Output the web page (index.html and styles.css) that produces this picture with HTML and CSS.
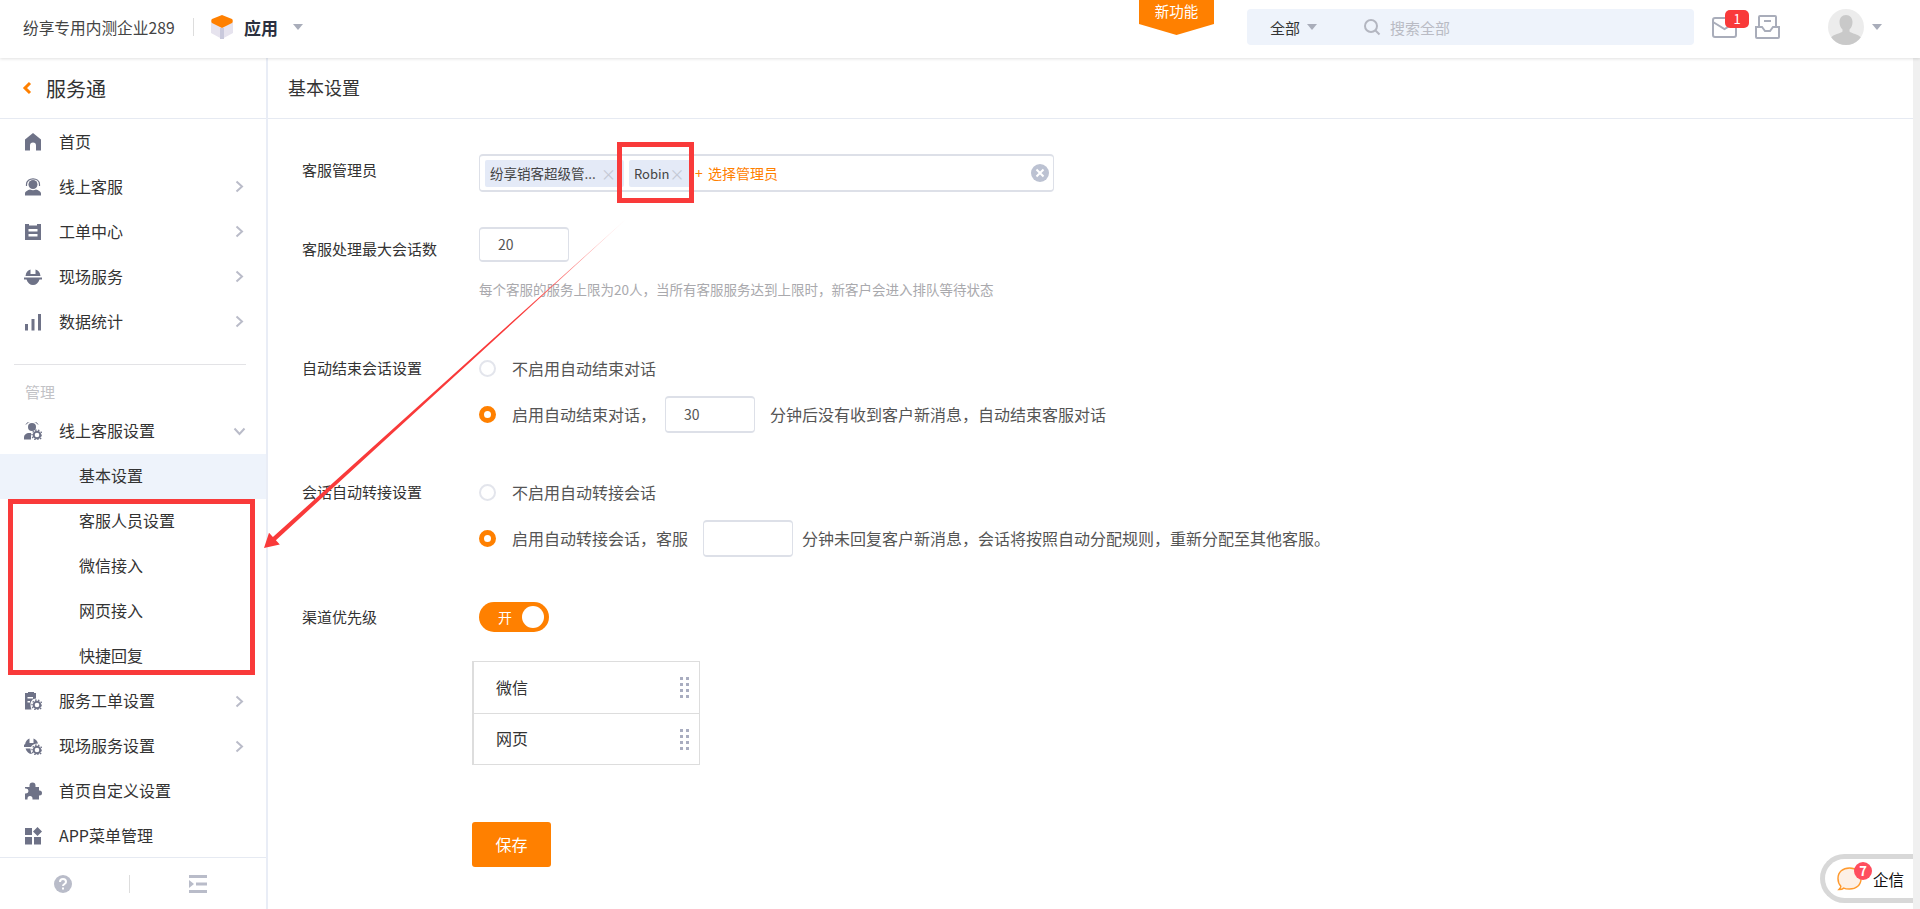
FILE: index.html
```html
<!DOCTYPE html>
<html lang="zh">
<head>
    <meta charset="utf-8">
    <title>基本设置</title>
    <link rel="stylesheet" href="styles.css">
</head>
<body>
    <header class="topbar">
        <div class="company">纷享专用内测企业289</div>
        <div class="topbar-sep"></div>
        <svg class="app-logo" viewBox="0 0 22 24">
            <path fill="#e6e3ee" d="M0 7l11 6 11-6v11l-11 6-11-6z"/>
            <path fill="#c9c9dc" d="M9 13h4v11h-4z"/>
            <path fill="#ff8000" d="M11 0l10 4c1 .5 1 3.5 0 4l-10 5-10-5c-1-.5-1-3.5 0-4z"/>
        </svg>
        <div class="app-name">应用</div>
        <span class="caret app-caret"></span>

        <div class="new-feature">新功能</div>

        <div class="search-box">
            <span class="search-scope">全部</span>
            <span class="caret"></span>
            <svg class="search-icon" viewBox="0 0 18 18">
                <circle cx="8" cy="8" r="6" fill="none" stroke="#b3b6c0" stroke-width="2"/>
                <path d="M12.5 12.5l4 4" stroke="#b3b6c0" stroke-width="2"/>
            </svg>
            <span class="search-text">搜索全部</span>
        </div>

        <div class="mail">
            <svg class="mail-icon" viewBox="0 0 25 21">
                <rect x="1" y="1" width="23" height="19" rx="2" fill="none" stroke="#a9adba" stroke-width="2"/>
                <path d="M1 5l11.500 7L24 5" fill="none" stroke="#a9adba" stroke-width="2"/>
            </svg>
            <span class="mail-badge">1</span>
        </div>
        <svg class="inbox-icon" viewBox="0 0 25 24">
            <path d="M4 12V2c0-.5.5-1 1-1h15c.5 0 1 .5 1 1v10" fill="none" stroke="#a9adba" stroke-width="2"/>
            <path d="M9 6h7" stroke="#a9adba" stroke-width="2"/>
            <path d="M1 12h6l3 4h5l3-4h6v10c0 .5-.5 1-1 1H2c-.5 0-1-.5-1-1z" fill="none" stroke="#a9adba" stroke-width="2"/>
        </svg>
        <svg class="avatar" viewBox="0 0 36 36">
            <clipPath id="avatarClip"><circle cx="18" cy="18" r="18"/></clipPath>
            <circle cx="18" cy="18" r="18" fill="#ececec"/>
            <path clip-path="url(#avatarClip)" fill="#c9c9c9" d="M18 6c4 0 6.500 3 6.500 7 0 3-1 5.500-3 7.500v2c2 2 9 2.500 12 6.500v8H2.500v-8c3-4 10-4.500 12-6.500v-2c-2-2-3-4.500-3-7.500 0-4 2.500-7 6.500-7z"/>
        </svg>
        <span class="caret avatar-caret"></span>
    </header>

    <div class="layout">
        <aside class="sidebar">
            <div class="sidebar-title">
                <svg class="back-icon" viewBox="0 0 10 14"><path d="M8 2L3 7l5 5" fill="none" stroke="#ff8000" stroke-width="3"/></svg>
                服务通
            </div>

            <div class="menu">
                <div class="menu-item">
                    <svg class="menu-icon" viewBox="0 0 18 18"><path d="M9 0l8 6.500V17.500h-5v-5a3 3 0 0 0-6 0v5H1V6.500z"/></svg>
                    首页
                </div>
                <div class="menu-item">
                    <svg class="menu-icon" viewBox="0 0 18 18"><circle cx="9" cy="6.500" r="4.500"/><path d="M2.500 8V6.500c0-7.500 13-7.500 13 0V8" fill="none" stroke="#6e7287" stroke-width="1.200"/><path d="M1 17.500v-2c0-2 3-3.500 5-4 2 1 4 1 6 0 2 .5 5 2 5 4v2z"/></svg>
                    线上客服
                    <svg class="chevron" viewBox="0 0 9 13"><path d="M1.500 1.500L7 6.500l-5.500 5" fill="none" stroke="#babcc9" stroke-width="2"/></svg>
                </div>
                <div class="menu-item">
                    <svg class="menu-icon" viewBox="0 0 18 18"><path fill-rule="evenodd" d="M1 1h4v1.500h8V1h4v16H1zM4.500 6v2.500h9V6zm0 5v2.500h9V11z"/></svg>
                    工单中心
                    <svg class="chevron" viewBox="0 0 9 13"><path d="M1.500 1.500L7 6.500l-5.500 5" fill="none" stroke="#babcc9" stroke-width="2"/></svg>
                </div>
                <div class="menu-item">
                    <svg class="menu-icon" viewBox="0 0 18 18"><path d="M1.500 8C2 4 4 2 6.500 1.500V6h5V1.500C14 2 16 4 16.500 8zM0 9.500h18v2h-2.500C14.500 15 12 17 9 17s-5.500-2-6.500-5.500H0z"/></svg>
                    现场服务
                    <svg class="chevron" viewBox="0 0 9 13"><path d="M1.500 1.500L7 6.500l-5.500 5" fill="none" stroke="#babcc9" stroke-width="2"/></svg>
                </div>
                <div class="menu-item">
                    <svg class="menu-icon" viewBox="0 0 18 18"><path d="M1 11h3v6.500H1zM7.500 6h3v11.500h-3zM14 1h3v16.500h-3z"/></svg>
                    数据统计
                    <svg class="chevron" viewBox="0 0 9 13"><path d="M1.500 1.500L7 6.500l-5.500 5" fill="none" stroke="#babcc9" stroke-width="2"/></svg>
                </div>

                <div class="menu-divider"></div>
                <div class="menu-group">管理</div>

                <div class="menu-item">
                    <svg class="menu-icon" viewBox="0 0 18 18">
                        <circle cx="8" cy="5" r="4"/><path d="M2 2.500a7 7 0 0 1 12 0" fill="none" stroke="#6e7287"/>
                        <path d="M0 17.500v-2.500c0-2 2-3.500 4-4h3v6.500z"/>
                        <circle cx="13" cy="13" r="3.300" fill="none" stroke="#6e7287" stroke-width="2"/>
                        <circle cx="13" cy="13" r="5" fill="none" stroke="#6e7287" stroke-width="1.300" stroke-dasharray="1.500 1.500"/>
                    </svg>
                    线上客服设置
                    <svg class="chevron-down" viewBox="0 0 13 9"><path d="M1.500 1.500l5 5.500 5-5.500" fill="none" stroke="#babcc9" stroke-width="2"/></svg>
                </div>
                <div class="menu-sub active">基本设置</div>
                <div class="menu-sub">客服人员设置</div>
                <div class="menu-sub">微信接入</div>
                <div class="menu-sub">网页接入</div>
                <div class="menu-sub">快捷回复</div>
                <div class="menu-item">
                    <svg class="menu-icon" viewBox="0 0 18 18">
                        <path d="M1 1h3V0h6v1h2v5.500c-3.500 0-5.500 3-5.500 6 0 2 .5 3.500 1 5H1zM3.500 5v1.500H9V5zm0 4v1.500h2.500V9z"/>
                        <circle cx="13" cy="13" r="3.300" fill="none" stroke="#6e7287" stroke-width="2"/>
                        <circle cx="13" cy="13" r="5" fill="none" stroke="#6e7287" stroke-width="1.300" stroke-dasharray="1.500 1.500"/>
                    </svg>
                    服务工单设置
                    <svg class="chevron" viewBox="0 0 9 13"><path d="M1.500 1.500L7 6.500l-5.500 5" fill="none" stroke="#babcc9" stroke-width="2"/></svg>
                </div>
                <div class="menu-item">
                    <svg class="menu-icon" viewBox="0 0 18 18">
                        <path d="M1 7.500C1.500 4 3.500 2 5.500 1.500V6h4V1.500c2 .5 4 2.500 4.500 5-3.500 0-6 1.500-7 3.500H0V7.500zM1.500 11.500h5c0 2 .5 4 1.500 5.500-3 0-5.500-2-6.500-5.500z"/>
                        <circle cx="13" cy="13" r="3.300" fill="none" stroke="#6e7287" stroke-width="2"/>
                        <circle cx="13" cy="13" r="5" fill="none" stroke="#6e7287" stroke-width="1.300" stroke-dasharray="1.500 1.500"/>
                    </svg>
                    现场服务设置
                    <svg class="chevron" viewBox="0 0 9 13"><path d="M1.500 1.500L7 6.500l-5.500 5" fill="none" stroke="#babcc9" stroke-width="2"/></svg>
                </div>
                <div class="menu-item">
                    <svg class="menu-icon" viewBox="0 0 18 18"><path d="M5.500 3.500a3 3 0 0 1 6 0V5H15v3.500h.5a2.500 2.500 0 0 1 0 5H15v4H8.500v-1a2.500 2.500 0 0 0-5 0v1H1v-6h1a2.500 2.500 0 0 0 0-5H1V5h4.500z"/></svg>
                    首页自定义设置
                </div>
                <div class="menu-item">
                    <svg class="menu-icon" viewBox="0 0 18 18"><path d="M1 1h7v7H1zM1 10h7v7.500H1zM10 10h7v7.500h-7zM13.500 0L18 4.500 13.500 9 9 4.500z"/></svg>
                    APP菜单管理
                </div>
            </div>

            <div class="sidebar-footer">
                <svg class="footer-icon" viewBox="0 0 18 18">
                    <circle cx="9" cy="9" r="9" fill="#b9bcc9"/>
                    <path d="M6 7c0-4 6-4 6 0 0 2-3 2-3 4" fill="none" stroke="#fff" stroke-width="2"/>
                    <path d="M8 12.500h2v2H8z" fill="#fff"/>
                </svg>
                <div class="footer-sep"></div>
                <svg class="footer-icon" viewBox="0 0 18 18">
                    <path fill="#b9bcc9" d="M0 0h18v3H0zM7 7.500h11v3H7zM0 15h18v3H0zM0 5l5 4-5 4z"/>
                </svg>
            </div>
        </aside>

        <main class="content">
            <div class="page-title">基本设置</div>

            <div class="form">
                <div class="form-row admin-row">
                    <div class="form-label label-up">客服管理员</div>
                    <div class="admin-box">
                        <span class="tag tag-long">纷享销客超级管...<i class="tag-x">×</i></span>
                        <span class="tag tag-short">Robin<i class="tag-x">×</i></span>
                        <span class="tag-add">+ 选择管理员</span>
                        <svg class="clear-icon" viewBox="0 0 18 18">
                            <circle cx="9" cy="9" r="9" fill="#bcc2d2"/>
                            <path d="M5.500 5.500l7 7M12.500 5.500l-7 7" stroke="#fff" stroke-width="2"/>
                        </svg>
                    </div>
                </div>

                <div class="form-row limit-row">
                    <div class="form-label label-down">客服处理最大会话数</div>
                    <div class="num-input limit-input">20</div>
                </div>
                <div class="hint">每个客服的服务上限为20人，当所有客服服务达到上限时，新客户会进入排队等待状态</div>

                <div class="form-row end-row">
                    <div class="form-label">自动结束会话设置</div>
                    <div class="option"><span class="radio"></span>不启用自动结束对话</div>
                </div>
                <div class="form-row option-row">
                    <div class="form-label"></div>
                    <div class="option">
                        <span class="radio checked"></span>启用自动结束对话，
                        <span class="num-input inline-input end-input">30</span>
                        分钟后没有收到客户新消息，自动结束客服对话
                    </div>
                </div>

                <div class="form-row transfer-row">
                    <div class="form-label">会话自动转接设置</div>
                    <div class="option"><span class="radio"></span>不启用自动转接会话</div>
                </div>
                <div class="form-row option-row">
                    <div class="form-label"></div>
                    <div class="option">
                        <span class="radio checked"></span>启用自动转接会话，客服
                        <span class="num-input inline-input transfer-input"></span>
                        分钟未回复客户新消息，会话将按照自动分配规则，重新分配至其他客服。
                    </div>
                </div>

                <div class="form-row channel-row">
                    <div class="form-label">渠道优先级</div>
                    <div class="switch"><span class="switch-text">开</span><span class="switch-knob"></span></div>
                </div>

                <div class="channel-table">
                    <div class="channel-item">微信<span class="drag-handle"><i></i><i></i><i></i><i></i><i></i><i></i><i></i><i></i></span></div>
                    <div class="channel-item">网页<span class="drag-handle"><i></i><i></i><i></i><i></i><i></i><i></i><i></i><i></i></span></div>
                </div>

                <button class="save-btn">保存</button>
            </div>
        </main>
        <div class="scrollbar"></div>
    </div>

    <!-- 截图上的红色标注 -->
    <div class="mark mark-robin"></div>
    <div class="mark mark-menu"></div>
    <svg class="mark-arrow" viewBox="0 0 1920 909">
        <defs>
            <linearGradient id="arrowFade" x1="625" y1="220" x2="274" y2="538" gradientUnits="userSpaceOnUse">
                <stop offset="0" stop-color="#ffd0d0"/>
                <stop offset="0.3" stop-color="#f93a3a"/>
            </linearGradient>
        </defs>
        <path fill="url(#arrowFade)" d="M625 220L275.900 540.200 279.800 544.500 264 548 269 532.700 272.900 537z"/>
    </svg>

    <div class="qixin">
        <svg class="qixin-icon" viewBox="0 0 26 25">
            <path fill="#fdf0e6" stroke="#ff9a2e" stroke-width="1.5" d="M13 1c7 0 12 4 12 11s-5 11-12 11c-2 0-4 0-6-1-1 1-3 1.500-5 1.500 1-1 2-2 2-3.500C2 18 1 15 1 12 1 5 6 1 13 1z"/>
        </svg>
        <span class="qixin-badge">7</span>
        <span class="qixin-text">企信</span>
    </div>
</body>
</html>
```

FILE: styles.css
```css
* {
    box-sizing: border-box;
}
html, body {
    margin: 0;
    height: 100%;
    overflow: hidden;
}
body {
    display: flex;
    flex-direction: column;
    font-family: "Noto Sans CJK SC", "Noto Sans", sans-serif;
    font-size: 16px;
    color: #333;
    background: #fff;
}

/* 顶部栏 */
.topbar {
    flex: none;
    height: 58px;
    display: flex;
    align-items: center;
    padding: 0 0 4px 23px;
    background: #fff;
    box-shadow: 0 1px 3px rgba(0, 0, 0, 0.12);
    z-index: 2;
}
.company {
    width: 152px;
    font-size: 15.7px;
    white-space: nowrap;
    color: #444;
}
.topbar-sep {
    width: 1px;
    height: 18px;
    margin-left: 18px;
    background: #ddd;
}
.app-logo {
    width: 22px;
    height: 24px;
    margin-left: 17px;
}
.app-name {
    margin-left: 11px;
    font-size: 17px;
    font-weight: 700;
    color: #2b3040;
}
.caret {
    width: 0;
    height: 0;
    border-left: 5px solid transparent;
    border-right: 5px solid transparent;
    border-top: 6px solid #a9adba;
}
.app-caret {
    margin-left: 15px;
}
.new-feature {
    width: 75px;
    height: 35px;
    margin: 0 0 auto 836px;
    padding-top: 1px;
    background: #ff8000;
    color: #fff;
    font-size: 14.5px;
    line-height: 20px;
    text-align: center;
    clip-path: polygon(0 0, 100% 0, 100% 24px, 50% 35px, 0 24px);
}
.search-box {
    width: 447px;
    height: 36px;
    margin-left: 33px;
    padding-left: 23px;
    display: flex;
    align-items: center;
    background: #eef3fb;
    border-radius: 4px;
}
.search-scope {
    font-size: 15px;
    margin-right: 7px;
    color: #333;
}
.search-icon {
    width: 18px;
    height: 18px;
    margin-left: 46px;
}
.search-text {
    margin-left: 9px;
    font-size: 15px;
    color: #b9bbc4;
}
.mail {
    position: relative;
    width: 25px;
    height: 21px;
    margin-left: 18px;
}
.mail-icon {
    display: block;
    width: 25px;
    height: 21px;
}
.mail-badge {
    position: absolute;
    left: 13px;
    top: -7px;
    width: 24px;
    height: 18px;
    border-radius: 5px;
    background: #f93a3a;
    color: #fff;
    font-size: 13px;
    line-height: 18px;
    text-align: center;
}
.inbox-icon {
    width: 25px;
    height: 24px;
    margin-left: 18px;
}
.avatar {
    width: 36px;
    height: 36px;
    margin-left: 48px;
}
.avatar-caret {
    margin-left: 8px;
}

/* 主体 */
.layout {
    flex: 1;
    display: flex;
    min-height: 0;
}
.sidebar {
    flex: none;
    width: 268px;
    display: flex;
    flex-direction: column;
    border-right: 2px solid #e9edf6;
}
.sidebar-title {
    flex: none;
    height: 61px;
    display: flex;
    align-items: center;
    padding-left: 22px;
    font-size: 20px;
    color: #333;
    border-bottom: 1px solid #e6eaf2;
}
.back-icon {
    width: 10px;
    height: 14px;
    margin-right: 14px;
}
.menu {
    flex: 1;
    min-height: 0;
    overflow: hidden;
}
.menu-item {
    height: 45.1px;
    display: flex;
    align-items: center;
    padding: 0 0 2px 24px;
    color: #333;
}
.menu-icon {
    width: 18px;
    height: 18px;
    margin: 2px 17px 0 0;
    fill: #6e7287;
}
.chevron {
    width: 9px;
    height: 13px;
    margin: 2px 22px 0 auto;
}
.chevron-down {
    width: 13px;
    height: 9px;
    margin: 2px 20px 0 auto;
}
.menu-divider {
    height: 1px;
    margin: 20px 20px 0 14px;
    background: #e3e3e6;
}
.menu-group {
    height: 43px;
    padding: 16px 0 0 25px;
    font-size: 15px;
    line-height: 22px;
    color: #c2c2c6;
}
.menu-sub {
    height: 45px;
    padding-left: 79px;
    line-height: 43px;
    color: #333;
}
.menu-sub.active {
    background: #eef3fb;
}
.sidebar-footer {
    flex: none;
    height: 52px;
    display: flex;
    align-items: center;
    padding-left: 54px;
    border-top: 1px solid #e6eaf2;
}
.footer-icon {
    width: 18px;
    height: 18px;
}
.footer-sep {
    width: 1px;
    height: 18px;
    margin: 0 59px 0 57px;
    background: #ddd;
}

/* 内容区 */
.content {
    flex: 1;
    min-width: 0;
}
.page-title {
    height: 61px;
    padding-left: 20px;
    line-height: 59px;
    font-size: 18px;
    color: #333;
    border-bottom: 1px solid #e6eaf2;
}
.form {
    padding: 35px 0 0 34px;
}
.form-row {
    display: flex;
    align-items: center;
}
.form-label {
    flex: none;
    width: 177px;
    padding-bottom: 2px;
    font-size: 15px;
    color: #333;
}
.label-up {
    padding-bottom: 8px;
}
.label-down {
    padding: 7px 0 0;
}
.admin-box {
    width: 575px;
    height: 38px;
    display: flex;
    align-items: center;
    padding: 0 5px;
    border: 1px solid #dde0e8;
    border-top-width: 2px;
    border-bottom-width: 2px;
    border-radius: 4px;
}
.tag {
    height: 27px;
    display: flex;
    align-items: center;
    padding: 0 8px 0 5px;
    margin-right: 5px;
    background: #e4eaf7;
    border-radius: 2px;
    font-size: 13.5px;
    white-space: nowrap;
    color: #444;
}
.tag-long {
    width: 139px;
}
.tag-short {
    width: 62px;
    font-size: 13px;
}
.tag-x {
    margin-left: auto;
    font-style: normal;
    font-size: 15px;
    color: #c3c8d4;
}
.tag-add {
    margin-left: -1px;
    font-size: 14px;
    word-spacing: 2px;
    color: #ff8000;
}
.clear-icon {
    width: 18px;
    height: 18px;
    margin-left: auto;
    margin-right: -1px;
}
.num-input {
    border: 1px solid #dde0e8;
    border-top-width: 2px;
    border-bottom-width: 2px;
    border-radius: 4px;
    background: #fff;
    font-size: 14px;
    color: #555;
}
.limit-row {
    margin-top: 35px;
}
.limit-input {
    width: 90px;
    height: 35px;
    padding-left: 18px;
    line-height: 31px;
}
.hint {
    margin: 17px 0 0 177px;
    font-size: 13.5px;
    line-height: 20px;
    color: #a9a9ad;
}
.end-row {
    margin-top: 51px;
}
.transfer-row {
    margin-top: 41px;
}
.option-row {
    margin-top: 9px;
}
.option {
    height: 37px;
    display: flex;
    align-items: center;
    padding-bottom: 2px;
    white-space: nowrap;
    color: #555;
}
.radio {
    width: 17px;
    height: 17px;
    margin: 2px 16px 0 0;
    border: 2px solid #e3e5ec;
    border-radius: 50%;
    background: #fff;
}
.radio.checked {
    border: 5px solid #ff8000;
}
.inline-input {
    height: 37px;
    width: 90px;
    line-height: 33px;
    padding-left: 18px;
}
.end-input {
    margin: 2px 15px 0 9px;
}
.transfer-input {
    margin: 2px 9px 0 15px;
}
.channel-row {
    margin-top: 45px;
}
.switch {
    width: 70px;
    height: 30px;
    display: flex;
    align-items: center;
    padding: 0 5px 0 19px;
    border-radius: 15px;
    background: #ff8000;
}
.switch-text {
    font-size: 14px;
    color: #fff;
}
.switch-knob {
    width: 22px;
    height: 22px;
    margin-left: auto;
    border-radius: 50%;
    background: #fff;
}
.channel-table {
    width: 228px;
    margin: 29px 0 0 170px;
    border: 1px solid #ddd;
    border-left-width: 2px;
}
.channel-item {
    height: 51px;
    display: flex;
    align-items: center;
    justify-content: space-between;
    padding: 0 10px 2px 22px;
}
.channel-item + .channel-item {
    border-top: 1px solid #ddd;
}
.drag-handle {
    display: grid;
    grid-template-columns: 3px 3px;
    gap: 3px;
    margin-top: 2px;
}
.drag-handle i {
    width: 3px;
    height: 3px;
    background: #a9adc0;
}
.save-btn {
    display: block;
    width: 79px;
    height: 45px;
    margin: 57px 0 0 170px;
    padding: 0 0 2px;
    border: none;
    border-radius: 3px;
    background: #ff8000;
    color: #fff;
    font-family: inherit;
    font-size: 16px;
}
.scrollbar {
    flex: none;
    width: 7px;
    background: #f0f0f0;
}

/* 红色标注 */
.mark {
    position: absolute;
    border: 5px solid #f93a3a;
    z-index: 3;
}
.mark-robin {
    left: 617px;
    top: 142px;
    width: 77px;
    height: 61px;
}
.mark-menu {
    left: 8px;
    top: 499px;
    width: 247px;
    height: 176px;
}
.mark-arrow {
    position: absolute;
    left: 0;
    top: 0;
    width: 1920px;
    height: 909px;
    z-index: 3;
    pointer-events: none;
}

/* 右下角企信 */
.qixin {
    position: absolute;
    right: 7px;
    bottom: 6px;
    width: 93px;
    height: 49px;
    display: flex;
    align-items: center;
    padding-left: 12px;
    background: #fff;
    border: 5px solid #d8d8d8;
    border-right: none;
    border-radius: 25px 0 0 25px;
    z-index: 3;
}
.qixin-icon {
    width: 25px;
    height: 24px;
}
.qixin-badge {
    position: absolute;
    left: 29px;
    top: 3px;
    width: 18px;
    height: 18px;
    border-radius: 50%;
    background: #ff4d5e;
    color: #fff;
    font-size: 13px;
    font-weight: 700;
    line-height: 18px;
    text-align: center;
}
.qixin-text {
    margin-left: 11px;
    font-size: 15.5px;
    color: #111;
}
```
